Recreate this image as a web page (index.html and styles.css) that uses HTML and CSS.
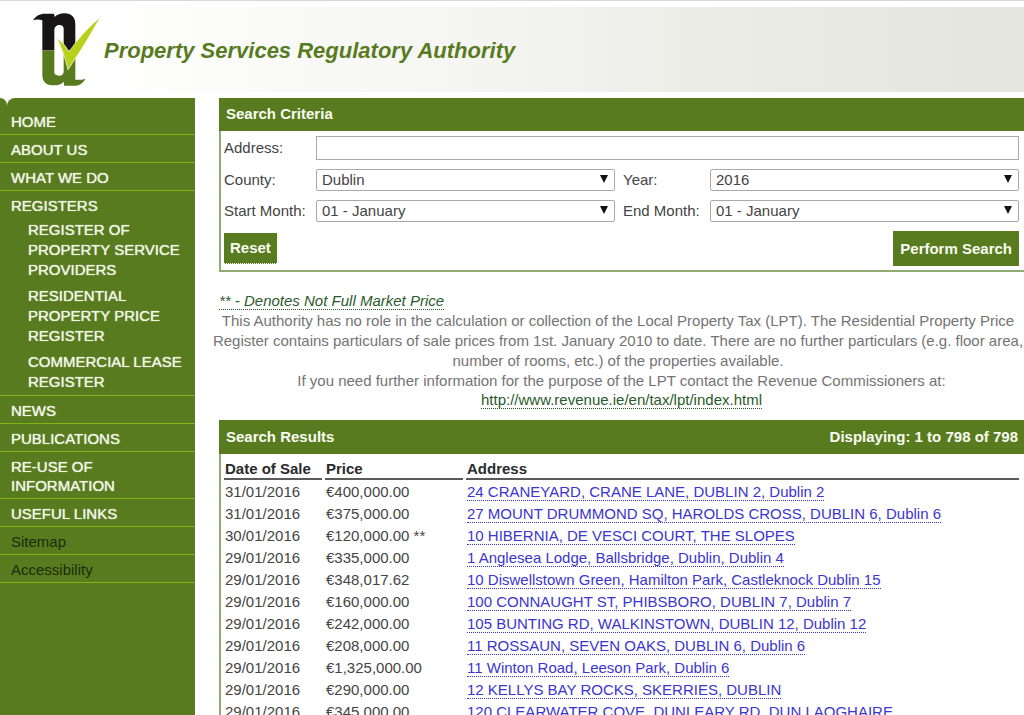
FILE: index.html
```html
<!DOCTYPE html>
<html lang="en">
<head>
<meta charset="utf-8">
<title>Property Services Regulatory Authority</title>
<link rel="stylesheet" href="styles.css">
</head>
<body>
<header class="banner">
  <div class="banner-band">
    <svg class="logo" viewBox="0 0 204 222" role="img" aria-label="PSRA logo">
      <path fill="#171516" d="M0 22 C8 8 22 2 34 2 H62 Q65 4 65 12 Q76 1 94 1 Q127 1 127 36 V112 H28 V22 Q14 17 0 22Z"/>
      <path fill="#587b1f" d="M28 112 H127 V200 Q142 202 158 197 Q146 216 130 218 H93 V206 Q84 217 62 217 Q28 217 28 186Z"/>
      <path fill="#fff" d="M64 50 Q66 36 79 36 Q92 36 92 48 V176 Q91 188 78 188 Q64 188 64 178Z"/>
      <path fill="#b7d019" stroke="#fff" stroke-width="2" stroke-linejoin="round" d="M71 74 Q96 92 108 116 Q148 58 202 12 Q160 90 105 170 Q92 116 71 74Z"/>
    </svg>
    <h1 class="banner-title">Property Services Regulatory Authority</h1>
  </div>
</header>
<div class="page">
  <nav class="sidebar">
    <div class="sidebar-cap"><span class="cap-left"></span><span class="cap-right"></span></div>
    <ul class="menu">
      <li><a href="#">HOME</a></li>
      <li><a href="#">ABOUT US</a></li>
      <li><a href="#">WHAT WE DO</a></li>
      <li><a href="#">REGISTERS</a>
        <ul class="submenu">
          <li><a href="#">REGISTER OF PROPERTY SERVICE PROVIDERS</a></li>
          <li><a href="#">RESIDENTIAL PROPERTY PRICE REGISTER</a></li>
          <li><a href="#">COMMERCIAL LEASE REGISTER</a></li>
        </ul>
      </li>
      <li><a href="#">NEWS</a></li>
      <li><a href="#">PUBLICATIONS</a></li>
      <li><a href="#">RE-USE OF<br>INFORMATION</a></li>
      <li><a href="#">USEFUL LINKS</a></li>
      <li><a class="minor" href="#">Sitemap</a></li>
      <li><a class="minor" href="#">Accessibility</a></li>
    </ul>
  </nav>
  <main class="content">
    <form class="panel">
      <h2 class="panel-title">Search Criteria</h2>
      <div class="criteria">
        <label for="address">Address:</label>
        <input class="field wide" id="address" type="text">
        <label for="county">County:</label>
        <div class="select"><select class="field" id="county"><option>Dublin</option></select></div>
        <label for="year">Year:</label>
        <div class="select"><select class="field" id="year"><option>2016</option></select></div>
        <label for="start">Start Month:</label>
        <div class="select"><select class="field" id="start"><option>01 - January</option></select></div>
        <label for="end">End Month:</label>
        <div class="select"><select class="field" id="end"><option>01 - January</option></select></div>
        <div class="actions">
          <button class="button reset" type="reset">Reset</button>
          <button class="button search" type="button">Perform Search</button>
        </div>
      </div>
    </form>
    <section class="notes">
      <p class="note"><a href="#"><em>** - Denotes Not Full Market Price</em></a></p>
      <p class="role">This Authority has no role in the calculation or collection of the Local Property Tax (LPT). The Residential Property Price Register contains particulars of sale prices from 1st. January 2010 to date. There are no further particulars (e.g. floor area, number of rooms, etc.) of the properties available.</p>
      <p class="contact">If you need further information for the purpose of the LPT contact the Revenue Commissioners at:<br><a href="#">http://www.revenue.ie/en/tax/lpt/index.html</a></p>
    </section>
    <section class="panel results">
      <div class="panel-title"><h2>Search Results</h2><span>Displaying: 1 to 798 of 798</span></div>
      <table class="sales">
        <thead><tr><th class="date">Date of Sale</th><th class="price">Price</th><th>Address</th></tr></thead>
        <tbody>
          <tr><td>31/01/2016</td><td>€400,000.00</td><td><a href="#">24 CRANEYARD, CRANE LANE, DUBLIN 2, Dublin 2</a></td></tr>
          <tr><td>31/01/2016</td><td>€375,000.00</td><td><a href="#">27 MOUNT DRUMMOND SQ, HAROLDS CROSS, DUBLIN 6, Dublin 6</a></td></tr>
          <tr><td>30/01/2016</td><td>€120,000.00 **</td><td><a href="#">10 HIBERNIA, DE VESCI COURT, THE SLOPES</a></td></tr>
          <tr><td>29/01/2016</td><td>€335,000.00</td><td><a href="#">1 Anglesea Lodge, Ballsbridge, Dublin, Dublin 4</a></td></tr>
          <tr><td>29/01/2016</td><td>€348,017.62</td><td><a href="#">10 Diswellstown Green, Hamilton Park, Castleknock Dublin 15</a></td></tr>
          <tr><td>29/01/2016</td><td>€160,000.00</td><td><a href="#">100 CONNAUGHT ST, PHIBSBORO, DUBLIN 7, Dublin 7</a></td></tr>
          <tr><td>29/01/2016</td><td>€242,000.00</td><td><a href="#">105 BUNTING RD, WALKINSTOWN, DUBLIN 12, Dublin 12</a></td></tr>
          <tr><td>29/01/2016</td><td>€208,000.00</td><td><a href="#">11 ROSSAUN, SEVEN OAKS, DUBLIN 6, Dublin 6</a></td></tr>
          <tr><td>29/01/2016</td><td>€1,325,000.00</td><td><a href="#">11 Winton Road, Leeson Park, Dublin 6</a></td></tr>
          <tr><td>29/01/2016</td><td>€290,000.00</td><td><a href="#">12 KELLYS BAY ROCKS, SKERRIES, DUBLIN</a></td></tr>
          <tr><td>29/01/2016</td><td>€345,000.00</td><td><a href="#">120 CLEARWATER COVE, DUNLEARY RD, DUN LAOGHAIRE</a></td></tr>
        </tbody>
      </table>
    </section>
  </main>
</div>
</body>
</html>
```
FILE: styles.css
```css
* { box-sizing: border-box; }

body {
  margin: 0;
  background: #fff;
  color: #444;
  font: 15px/20px "Liberation Sans", Arial, sans-serif;
}

h1, h2, p, ul { margin: 0; padding: 0; }
ul { list-style: none; }

.banner {
  border-top: 1px solid #d8d8d8;
  padding: 6px 0;
}

.banner-band {
  display: flex;
  align-items: center;
  gap: 3px;
  height: 85px;
  padding-left: 33px;
  background: linear-gradient(to right, #fff 8%, #f5f6f2 45%, #ebece6 70%, #e5e6e0 95%);
}

.logo { width: 68px; height: 74px; }

.banner-title {
  padding-top: 2px;
  color: #587b1f;
  font-size: 22px;
  font-style: italic;
  line-height: 28px;
}

.page {
  display: flex;
  align-items: stretch;
  gap: 24px;
}

.sidebar {
  flex: 0 0 195px;
  display: flex;
  flex-direction: column;
}

.sidebar-cap { display: flex; height: 9px; }
.cap-left { width: 7px; background: #587b1f; border-radius: 0 7px 0 0; }
.cap-right { flex: 1; background: #587b1f; border-radius: 8px 0 0 0; }

.menu {
  flex: 1;
  background: #587b1f;
  line-height: 19px;
}

.menu > li {
  padding: 5px 11px 3px;
  border-bottom: 1px solid #83b513;
}

.menu a {
  display: block;
  color: #f1f7e6;
  text-decoration: none;
  text-shadow: 0 0 1px #f1f7e6;
}

.menu .minor { color: #1d2c08; text-shadow: none; }

.submenu { padding: 5px 0 0 17px; line-height: 20px; }
.submenu li { margin: 0 -11px 6px 0; }
.submenu li:last-child { margin-bottom: 0; }

.content { flex: 1; min-width: 0; }

.panel {
  border: solid #91ac72;
  border-width: 0 0 2px 2px;
}

.panel-title {
  margin-left: -2px;
  padding: 6px 6px 7px 7px;
  background: #587b1f;
  color: #f8fbf2;
  font-size: 15px;
  font-weight: bold;
  line-height: 20px;
}

.criteria {
  display: grid;
  grid-template-columns: 84px 299fr 79px 309fr;
  gap: 9px 8px;
  align-items: center;
  padding: 5px 5px 4px 3px;
}

.criteria label { white-space: nowrap; }

.field {
  display: block;
  width: 100%;
  height: 22px;
  margin: 0;
  padding: 0 5px;
  border: 1px solid #a9a9a9;
  border-radius: 2px;
  background: #fff;
  color: #444;
  font: inherit;
  appearance: none;
}

.wide { grid-column: 2 / -1; height: 24px; border-radius: 0; }

.select { position: relative; }
.select::after {
  content: "";
  position: absolute;
  top: 6px;
  right: 7px;
  border: solid transparent;
  border-width: 8px 4px 0;
  border-top-color: #111;
  pointer-events: none;
}

.actions {
  grid-column: 1 / -1;
  display: flex;
  justify-content: space-between;
  align-items: center;
}

.button {
  border: 0;
  background: #587b1f;
  color: #f8fbf2;
  font: bold 15px/20px "Liberation Sans", Arial, sans-serif;
}

.reset { padding: 5px 6px; border-bottom: 1px dotted #fff; }
.search { padding: 8px 7px 7px; }

.notes {
  padding: 19px 0 11px;
  color: #747474;
  text-align: center;
}

.notes a {
  color: #2a5a2a;
  text-decoration: none;
  border-bottom: 1px dotted #2a5a2a;
}

.note { text-align: left; }
.role { margin-left: -7px; }
.contact { line-height: 19px; }

.results { border-bottom: 0; }

.results .panel-title {
  display: flex;
  justify-content: space-between;
  padding-top: 7px;
}

.results h2 { font-size: 15px; }

.sales {
  width: 100%;
  border-spacing: 3px 0;
  table-layout: fixed;
  padding-right: 2px;
}

.sales th {
  height: 26px;
  padding: 5px 1px 0;
  border-bottom: 2px solid #5a5a5a;
  color: #2b2b2b;
  line-height: 19px;
  text-align: left;
}

.sales td { padding: 2px 1px 0; white-space: nowrap; }
.sales .date { width: 98px; }
.sales .price { width: 138px; }

.sales a {
  color: #3b35d0;
  text-decoration: none;
  border-bottom: 1px dotted #3b35d0;
}
```
